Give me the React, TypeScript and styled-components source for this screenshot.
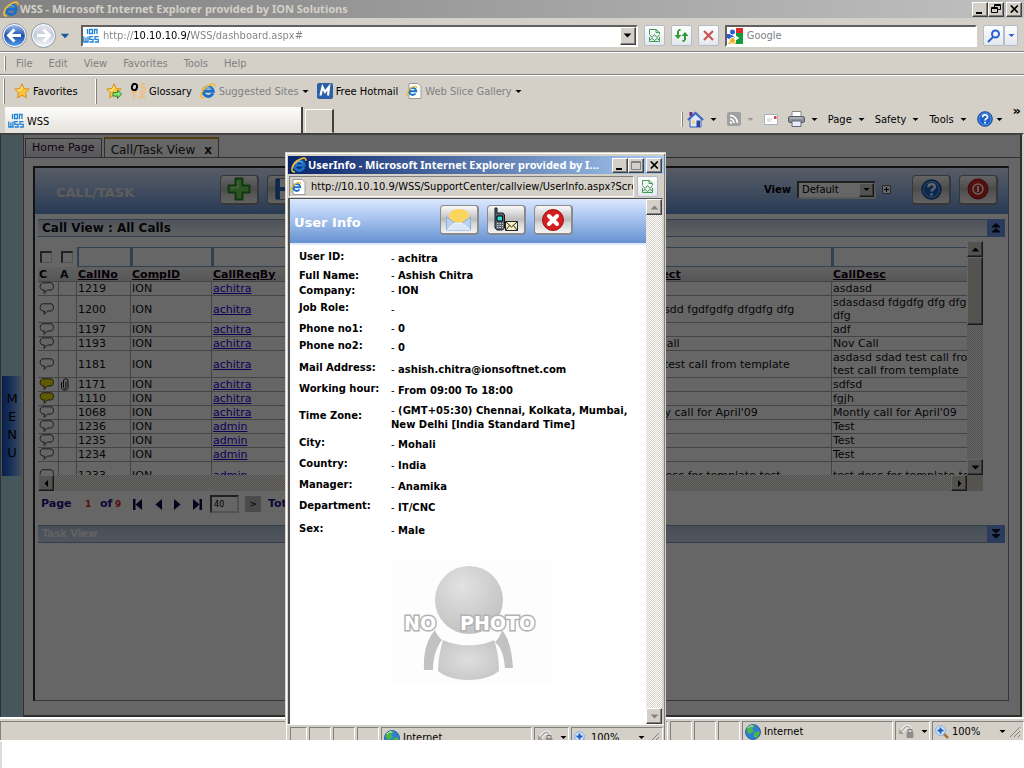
import React from 'react';
import styled, { createGlobalStyle, css } from 'styled-components';

const face = '#d4d0c8';
const ui = '"DejaVu Sans Condensed", "Noto Sans", sans-serif';
const uiBold = '"Noto Sans", "Open Sans", sans-serif';
const wide = '"DejaVu Sans", sans-serif';
const headerFill = 'linear-gradient(#dbe8fd, #b3cbf3 35%, #6592d2)';
const dither = 'repeating-conic-gradient(#ffffff 0 25%, #d4d0c8 0 50%) 0 0 / 2px 2px';

const GlobalStyle = createGlobalStyle`
  * { box-sizing: border-box; }
  body { margin: 0; background: #fff; font: 11px ${ui}; color: #000; }
  button, input, select { font: inherit; margin: 0; padding: 0; border-radius: 0; }
  svg { display: block; flex: none; }
`;

const Desktop = styled.div`
  min-height: 100vh;
  display: flex;
  flex-direction: column;
  padding-bottom: 28px;
  background: linear-gradient(#dedad4, #dedad4) 0 100% / 2px 26px no-repeat #fff;
`;
const BrowserWindow = styled.main`
  position: relative;
  flex: 1;
  display: flex;
  flex-direction: column;
  background: ${face};
`;

const raised = css`
  background: ${face};
  border: 1px solid;
  border-color: #fff #404040 #404040 #fff;
  box-shadow: inset -1px -1px #808080;
`;
const TitleBar = styled.header<{ $active?: boolean }>`
  display: flex;
  align-items: center;
  height: 18px;
  padding: 0 2px 0 3px;
  font: bold 11px/18px ${uiBold};
  color: ${p => (p.$active ? '#fff' : face)};
  background: ${p => (p.$active ? 'linear-gradient(90deg, #0a246a, #a6caf0)' : 'linear-gradient(90deg, #808080, #c0c0c0)')};
`;
const TitleText = styled.h1`
  flex: 1;
  min-width: 0;
  margin: 0;
  padding: 0 6px 0 1px;
  font: inherit;
  white-space: nowrap;
  overflow: hidden;
  text-overflow: ellipsis;
`;
const CaptionButton = styled.button<{ $spaced?: boolean }>`
  ${raised}
  flex: none;
  display: grid;
  place-items: center;
  width: 16px;
  height: 15px;
  margin-left: ${p => (p.$spaced ? 2 : 0)}px;
`;

const NavRow = styled.div`
  display: flex;
  align-items: center;
  gap: 6px;
  height: 34px;
  padding: 2px 6px 0 2px;
  border-bottom: 1px solid #808080;
`;
const Travel = styled.div`
  display: flex;
  align-items: center;
  gap: 4px;
  width: 73px;
`;
const RoundButton = styled.button`
  border: 0;
  background: none;
`;
const SunkenField = styled.div`
  display: flex;
  align-items: center;
  height: 22px;
  min-width: 0;
  background: #fff;
  border: 2px solid;
  border-color: #606060 #fff #fff #606060;
`;
const AddressField = styled(SunkenField)` flex: 561; `;
const SearchField = styled(SunkenField)` flex: 252; gap: 4px; `;
const AddressInput = styled.input`
  flex: 1;
  min-width: 0;
  height: 18px;
  margin-left: 4px;
  border: 0;
  outline: 0;
  color: transparent;
  background: linear-gradient(90deg, #808080 31px, #000 31px 87px, #808080 87px);
  -webkit-background-clip: text;
  background-clip: text;
`;
const PlainInput = styled.input<{ $color: string }>`
  flex: 1;
  min-width: 0;
  width: 100%;
  height: 16px;
  border: 0;
  outline: 0;
  background: none;
  color: ${p => p.$color};
`;
const DropButton = styled.button`
  ${raised}
  flex: none;
  display: grid;
  place-items: center;
  width: 16px;
  height: 18px;
`;
const GlassButton = styled.button<{ $narrow?: boolean }>`
  flex: none;
  display: grid;
  place-items: center;
  width: ${p => (p.$narrow ? 14 : 21)}px;
  height: 21px;
  border: 1px solid #b4bcc8;
  border-radius: 2px;
  background: linear-gradient(#fdfdfd, #e4e8ee);
`;
const Split = styled.div` display: flex; `;

const MenuRow = styled.nav`
  display: flex;
  align-items: center;
  gap: 16px;
  height: 23px;
  padding-left: 4px;
  border-top: 1px solid #fff;
  border-bottom: 1px solid #808080;
`;
const Grip = styled.span<{ $tall?: boolean }>`
  flex: none;
  width: 2px;
  height: ${p => (p.$tall ? 25 : 15)}px;
  margin-right: ${p => (p.$tall ? 8 : -6)}px;
  border-left: 1px solid #fff;
  border-right: 1px solid #808080;
`;
const TextButton = styled.button<{ $muted?: boolean; $gap?: number }>`
  display: flex;
  align-items: center;
  gap: ${p => p.$gap ?? 3}px;
  border: 0;
  background: none;
  white-space: nowrap;
  color: ${p => (p.$muted ? '#808080' : '#000')};
`;
const FavoritesRow = styled.div`
  display: flex;
  align-items: center;
  gap: 9px;
  height: 31px;
  padding-left: 3px;
  border-top: 1px solid #fff;
`;
const FavoritesMain = styled.div` width: 72px; margin-left: -8px; `;
const LinkBar = styled.div` display: flex; align-items: center; gap: 8px; margin-left: -8px; `;
const TabRow = styled.div`
  display: flex;
  align-items: flex-end;
  height: 27px;
  padding: 0 3px 0 5px;
`;
const BrowserTab = styled.button`
  display: flex;
  align-items: center;
  gap: 3px;
  flex: 0 1 298px;
  height: 26px;
  padding: 2px 3px 0;
  text-align: left;
  border: 0;
  border-right: 2px solid #404040;
  background: linear-gradient(#fdfdfc, #e4e1db);
`;
const NewTab = styled.button`
  width: 29px;
  height: 24px;
  margin-left: 2px;
  border: 1px solid;
  border-color: #fff #404040 ${face} #fff;
  border-right-width: 2px;
  background: ${face};
`;
const CommandBar = styled.div`
  display: flex;
  align-items: center;
  gap: 10px;
  height: 28px;
  margin-left: auto;
`;
const Overflow = styled.span` align-self: flex-start; font: bold 13px/12px ${wide}; `;

const PageArea = styled.div`
  flex: 1;
  display: flex;
  border: 0 solid #404040;
  border-top-width: 2px;
  border-right: 2px solid ${face};
`;
const Dimmed = styled.div`
  position: relative;
  flex: 1;
  min-width: 0;
  display: flex;
  background: #fff;
  &::after {
    content: '';
    position: absolute;
    inset: 0;
    background: rgba(0, 0, 0, 0.6);
    pointer-events: none;
  }
`;
const SideRail = styled.aside`
  flex: none;
  display: flex;
  align-items: center;
  width: 24px;
  background: linear-gradient(90deg, #777 1px, #add8e6 1px 22px, #ddd 22px 23px, #777 23px);
`;
const MenuHandle = styled.button`
  width: 20px;
  height: 100px;
  margin-left: 2px;
  padding: 0 2px;
  border: 0;
  font: 13px/18px ${wide};
  color: #000;
  word-break: break-all;
  background: linear-gradient(90deg, #1749bd, #3f7be0 45%, #a9c9ee);
`;
const Frame = styled.section`
  flex: 1;
  min-width: 0;
  display: flex;
  flex-direction: column;
  padding-top: 2px;
  border-right: 2px solid #777;
  border-bottom: 2px solid #777;
`;
const PageTabs = styled.div`
  display: flex;
  align-items: flex-end;
  gap: 2px;
  height: 20px;
  padding-left: 1px;
`;
const PageTab = styled.button<{ $active?: boolean }>`
  display: flex;
  align-items: center;
  gap: 9px;
  height: ${p => (p.$active ? 21 : 19)}px;
  margin-bottom: ${p => (p.$active ? -1 : 0)}px;
  padding: ${p => (p.$active ? '2px 6px 0' : '0 6px')};
  white-space: nowrap;
  font: ${p => (p.$active ? 12 : 11)}px/16px ${wide};
  color: ${p => (p.$active ? '#222' : '#303')};
  border: 1px solid #777;
  border-bottom: 0;
  border-top: ${p => (p.$active ? '2px solid #d69a2a' : '1px solid #777')};
  background: ${p => (p.$active ? '#fff' : 'linear-gradient(#fff, #dcdce8)')};
`;
const Pane = styled.div`
  flex: 1;
  display: flex;
  padding: 8px 11px 14px 9px;
  border-top: 1px solid #777;
`;
const Panel = styled.div`
  flex: 1;
  min-width: 0;
  border: 1px solid #888;
  border-top: 2px solid #303038;
  border-left: 2px solid #303038;
`;
const TaskHeader = styled.header`
  display: flex;
  align-items: center;
  height: 46px;
  padding: 0 10px 3px 21px;
  background: ${headerFill};
`;
const TaskTitle = styled.h2`
  width: 164px;
  margin: 0;
  padding-top: 6px;
  font: bold 13px/16px ${wide};
  color: #e8e8e8;
`;
const Spacer = styled.span` flex: 1; `;
const ToolGroup = styled.div` display: flex; gap: 8px; `;
const ToolButton = styled.button`
  display: grid;
  place-items: center;
  width: 39px;
  height: 30px;
  border: 1px solid #8a8a8a;
  border-right-width: 2px;
  border-bottom-width: 2px;
  border-radius: 4px;
  background: linear-gradient(#fafafa, #dcdcdc 25%, #bcbcbc 50%, #d6d6d6 65%, #f4f4f4);
`;
const ViewPicker = styled.label`
  display: flex;
  align-items: center;
  gap: 6px;
  margin-right: 21px;
  font: bold 10px/12px ${wide};
`;
const SelectBox = styled.span`
  display: flex;
  align-items: center;
  width: 79px;
  height: 18px;
  border: 2px solid;
  border-color: #505050 #ddd #ddd #505050;
  background: #fff;
`;
const Select = styled.select`
  appearance: none;
  flex: 1;
  min-width: 0;
  padding-left: 3px;
  border: 0;
  background: none;
  font: 10px/14px ${wide};
  color: #000;
`;
const SmallDrop = styled.span`
  ${raised}
  display: grid;
  place-items: center;
  width: 15px;
  height: 14px;
`;
const SectionBar = styled.div<{ $faint?: boolean }>`
  display: flex;
  align-items: center;
  justify-content: space-between;
  height: 18px;
  margin: ${p => (p.$faint ? '8px' : '5px')} 3px 0;
  padding-left: 4px;
  font: bold ${p => (p.$faint ? 10 : 12)}px/16px ${wide};
  color: ${p => (p.$faint ? '#f4f6fa' : '#111')};
  border: 1px solid #7f9cba;
  border-width: 1px 0;
  background: ${p => (p.$faint ? 'linear-gradient(#b4c4d8, #c9d6e8)' : 'linear-gradient(#c4d0e0, #eef2f8)')};
`;
const SectionTitle = styled.h3` margin: 0; font: inherit; `;
const FoldButton = styled.button`
  display: grid;
  place-items: center;
  width: 18px;
  height: 18px;
  border: 0;
  background: #6c93e4;
`;
const GridBox = styled.div`
  display: grid;
  grid-template-columns: minmax(0, 1fr) 16px;
  grid-template-rows: 234px 16px;
  margin: 4px 25px 0 3px;
`;
const GridView = styled.div` overflow: hidden; `;
const Table = styled.table`
  table-layout: fixed;
  width: 1054px;
  border-spacing: 0;
  font: 11px/13px ${wide};
  color: #111;
`;
const Col = styled.col<{ $w: number }>` width: ${p => p.$w}px; `;
const FilterCell = styled.td`
  height: 26px;
  padding: 5px 0 0;
`;
const FilterInput = styled.input`
  display: block;
  width: 100%;
  height: 20px;
  border: 1px solid #7aa4cc;
  border-left-width: 2px;
  background: #fff;
`;
const Tick = styled.input`
  appearance: none;
  display: block;
  width: 12px;
  height: 12px;
  margin-left: 2px;
  border: 1px solid #ccc;
  border-top: 2px solid #555;
  border-left: 2px solid #555;
`;
const HeadCell = styled.th`
  height: 15px;
  padding: 0 0 0 1px;
  text-align: left;
  border-bottom: 1px solid #aaa;
  background: linear-gradient(#f4f4f4, #d8d8d8);
`;
const Cell = styled.td<{ $tall?: boolean }>`
  height: ${p => (p.$tall ? 27 : 14)}px;
  padding: 0 0 0 1px;
  white-space: nowrap;
  overflow: hidden;
  border-right: 1px solid #aaa;
  border-bottom: 1px solid #aaa;
`;
const SortLink = styled.a` color: #100010; text-decoration: underline; `;
const CellLink = styled.a` color: #2200dd; text-decoration: underline; `;

const ScrollTrack = styled.div<{ $across?: boolean }>`
  display: flex;
  flex-direction: ${p => (p.$across ? 'row' : 'column')};
  justify-content: space-between;
  background: ${dither};
`;
const ScrollButton = styled.button`
  ${raised}
  display: grid;
  place-items: center;
  width: 16px;
  height: 16px;
`;
const ScrollThumb = styled.div`
  ${raised}
  height: 68px;
  margin-bottom: auto;
`;
const Corner = styled.div` background: ${face}; `;

const Pager = styled.div`
  display: flex;
  align-items: center;
  height: 26px;
  padding-left: 6px;
  font: bold 11px/14px ${wide};
  color: #22128a;
  white-space: nowrap;
`;
const PagerWord = styled.span<{ $w: number }>` width: ${p => p.$w}px; `;
const PagerNumber = styled.span<{ $w: number }>`
  width: ${p => p.$w}px;
  font-size: 9px;
  color: #e02020;
`;
const PagerButton = styled.button<{ $w: number }>`
  width: ${p => p.$w}px;
  border: 0;
  background: none;
`;
const PagerInput = styled.input`
  width: 29px;
  height: 18px;
  margin-right: 6px;
  padding: 0 2px;
  border: 2px solid;
  border-color: #505050 #ccc #ccc #505050;
  font: 9px/12px ${ui};
`;
const GoButton = styled.button`
  width: 16px;
  height: 16px;
  margin-right: 7px;
  border: 0;
  background: #bbb;
  font: 9px/14px ${wide};
`;

const StatusBar = styled.footer<{ $popup?: boolean }>`
  display: flex;
  gap: 2px;
  height: ${p => (p.$popup ? 16 : 23)}px;
  padding: ${p => (p.$popup ? '2px 0 0 3px' : '2px 0 0')};
  overflow: hidden;
  border-top: ${p => (p.$popup ? '1px solid #fff' : '2px solid #fff')};
`;
const StatusCell = styled.div<{ $w?: number }>`
  display: flex;
  align-items: center;
  gap: 3px;
  flex: ${p => (p.$w ? `none` : '1')};
  width: ${p => (p.$w ? `${p.$w}px` : 'auto')};
  height: 20px;
  padding: 0 2px;
  border-left: 1px solid #808080;
  border-top: 1px solid #808080;
  border-right: 1px solid #fff;
  white-space: nowrap;
`;

const Popup = styled.section`
  position: absolute;
  top: 152px;
  bottom: 0;
  left: 285px;
  width: 381px;
  display: flex;
  flex-direction: column;
  overflow: hidden;
  padding: 2px 1px 0;
  background: ${face};
  border: 1px solid ${face};
  border-bottom: 0;
  box-shadow: inset 1px 1px #fff, inset -1px 0 #808080;
`;
const PopupTitle = styled.div` padding: 1px 0 1px 1px; `;
const PopupAddress = styled.div`
  display: flex;
  align-items: center;
  gap: 3px;
  height: 23px;
  padding: 0 6px 0 2px;
`;
const PopupField = styled.div`
  flex: 1;
  display: flex;
  align-items: center;
  gap: 5px;
  min-width: 0;
  height: 21px;
  border: 1px solid;
  border-color: #808080 #fff #fff #808080;
`;
const PopupBody = styled.div`
  flex: 1;
  display: flex;
  margin: 0 1px;
  border: 0 solid #505050;
  border-top-width: 1px;
  border-left-width: 2px;
  border-right: 1px solid ${face};
`;
const Doc = styled.div` flex: 1; background: #fff; `;
const InfoHeader = styled.header`
  display: flex;
  align-items: center;
  height: 46px;
  padding: 0 73px 2px 4px;
  border-bottom: 2px solid #dfeafc;
  background: ${headerFill};
`;
const InfoTitle = styled.h2`
  flex: 1;
  margin: 0;
  padding-top: 6px;
  font: bold 13px/16px ${wide};
  color: #fff;
`;
const InfoTable = styled.table`
  margin: 5px 0 17px 9px;
  border-spacing: 0;
  font: bold 10px/14px ${wide};
`;
const InfoRow = styled.tr<{ $h: number }>` height: ${p => p.$h}px; `;
const InfoLabel = styled.th<{ $lift?: boolean }>`
  width: 92px;
  padding: 0 0 ${p => (p.$lift ? 4 : 0)}px;
  text-align: left;
  white-space: nowrap;
`;
const InfoValue = styled.td` padding: 0; white-space: nowrap; `;
const Dash = styled.span` font-weight: normal; `;
const Photo = styled.figure` margin: 0 0 0 102px; `;

const Arrow = ({ dir = 'down', color = '#000', size = 7 }: { dir?: 'up' | 'down' | 'left' | 'right'; color?: string; size?: number }) => {
  const shape = { down: 'M.5 2h6L3.500 5z', up: 'M.5 5h6L3.500 2z', left: 'M5 0v7L1.500 3.500z', right: 'M2 0v7l3.500-3.500z' }[dir];
  return <svg width={size} height={size} viewBox="0 0 7 7" fill={color}><path d={shape} /></svg>;
};
const IELogo = ({ size = 16 }: { size?: number }) => (
  <svg width={size} height={size} viewBox="0 0 16 16" fill="none">
    <path d="M13 10.300A5 4.800 0 1 1 13.300 8.300H5" stroke="#1d70c8" strokeWidth="3" />
    <path d="M4.500 7C5.500 4.500 9.500 3.500 11.500 6" stroke="#7cc6f5" strokeWidth="1" />
    <path d="M4 14.800C-1 16 .5 8 6 4 10.500.8 15.500-.5 14.800 3.800" stroke="#f3bc2c" strokeWidth="1.600" />
  </svg>
);
const PageLogo = () => (
  <svg width="16" height="16" viewBox="0 0 16 16">
    <path d="M3 .5h9l3 3v12H3z" fill="#fff" stroke="#9a9a9a" />
    <g fill="none"><path d="M9.500 10.500a3.500 3.500 0 1 1 .7-2.300H4" stroke="#1d70c8" strokeWidth="2" /><path d="M2 13C-.5 12 2 6.500 6 4.500 9 3 11 3 10.500 5" stroke="#f3bc2c" strokeWidth="1.200" /></g>
  </svg>
);
const SiteLogo = () => (
  <svg width="16" height="16" viewBox="0 0 16 16" fill="none" stroke="#1f83d8" strokeWidth="1.300">
    <path d="M4.500 1v5M6.500 1.500h3v4h-3zM11.500 6V1.500h2.500V6M.8 8.500V14h4.200V8.500M2.900 9.500v4.500M10 8.700H6.800v2.600H10V14H6.500M15.500 8.700H12v2.600h3.200V14H11.700" />
  </svg>
);
const Minimize = () => <svg width="10" height="9"><path d="M1 7h6v2H1z" /></svg>;
const Restore = () => <svg width="10" height="10" fill="none" stroke="#000"><path d="M3.500 3V.5h6v5H7M3 1.500h7M.5 3.500h6v5h-6zM0 4.500h7" /></svg>;
const Maximize = () => <svg width="10" height="9" fill="none" stroke="#808080"><path d="M.5.500h9v8h-9zM0 1.500h10" /></svg>;
const CloseGlyph = () => <svg width="9" height="8" fill="none" stroke="#000" strokeWidth="1.700"><path d="M.8.500l7 7M7.800.500l-7 7" /></svg>;
const CompatPage = () => (
  <svg width="13" height="15" viewBox="0 0 13 15" fill="none" stroke="#3f9a55">
    <path d="M1.500 6V1.500h6.500l3.500 3V6M8 1.500v3h3.500M1.500 6.500l2.500 3 2.500-3 2.500 3 2.500-3M1.500 9v4.500h10V9M1.500 12l2.500-1.500 2.500 2 2.500-2 2.500 1.500" />
  </svg>
);
const TravelArrow = ({ back }: { back?: boolean }) => (
  <svg width="25" height="25" viewBox="0 0 25 25">
    <defs>
      <linearGradient id={back ? 'tb' : 'tf'} x1="0" y1="0" x2="0" y2="1">
        <stop offset="0" stopColor={back ? '#9dbfee' : '#dfe5ee'} />
        <stop offset=".5" stopColor={back ? '#1f4fae' : '#c4ccd8'} />
        <stop offset="1" stopColor={back ? '#4e9bea' : '#f5f8fc'} />
      </linearGradient>
    </defs>
    <circle cx="12.500" cy="12.500" r="12" fill="#fff" stroke="#8892a4" />
    <circle cx="12.500" cy="12.500" r="10.500" fill={`url(#${back ? 'tb' : 'tf'})`} />
    <path d={back ? 'M12.500 6.500l-6 6 6 6M7 12.500h12' : 'M12.500 6.500l6 6-6 6M18 12.500H6'} fill="none" stroke="#fff" strokeWidth="3" />
  </svg>
);
const RefreshIcon = () => (
  <svg width="15" height="15" viewBox="0 0 15 15" fill="#2f9a35"><path d="M6.500 1v2H5v4h2.500L4 11 .5 7H3V3.500L5 1zM8.500 14v-2H10V8H7.500L11 4l3.500 4H12v3.500L10 14z" /></svg>
);
const StopIcon = () => <svg width="13" height="13" fill="none" stroke="#c8504c" strokeWidth="2"><path d="M2 2l9 9M11 2l-9 9" /></svg>;
const GoogleIcon = () => (
  <svg width="16" height="16" viewBox="0 0 16 16">
    <path fill="#fff" d="M0 0h16v16H0z" /><path fill="#2a5bd7" d="M0 6h5l3 4-4 2-4-2z" /><path fill="#e22b28" d="M9 0h7v5H9z" /><path fill="#129a3c" d="M9 5h7v11H9z" /><path fill="#f5ae1b" d="M1 16l2-4h5l1 4z" />
    <circle cx="5.500" cy="4" r="3" fill="#2a5bd7" stroke="#fff" /><circle cx="5.500" cy="12.500" r="3" fill="#f5ae1b" stroke="#fff" /><path d="M6 7l5 3-3 2" fill="none" stroke="#fff" strokeWidth="1.500" />
  </svg>
);
const SearchIcon = () => <svg width="14" height="14" fill="none" stroke="#2b5fd0" strokeWidth="2"><circle cx="8.500" cy="5" r="3.500" /><path d="M6 8l-5 5" /></svg>;
const starPath = 'M8 .8l2.200 4.700 5.100.6-3.800 3.500 1 5.200L8 12.300l-4.500 2.500 1-5.200L.7 6.100l5.100-.6z';
const Star = ({ add }: { add?: boolean }) => (
  <svg width="16" height="16" viewBox="0 0 16 16">
    <path d={starPath} fill="#fbc53c" stroke="#d88f1c" /><path d="M8 3.500L6.500 7 3 7.500" fill="none" stroke="#fff0b0" />
    {add && <path d="M7 9.500h4.500V7l4 4-4 4.500V13H7z" fill="#8ade74" stroke="#2d8a2a" />}
  </svg>
);
const OsIcon = () => (
  <svg width="16" height="16" viewBox="0 0 16 16"><ellipse cx="4.500" cy="4" rx="2.500" ry="3.200" fill="none" stroke="#000" strokeWidth="2" transform="rotate(15 4.500 4)" /><path d="M15 1c-5-1-5 4-2 3.500s3 4-2 3M1 9h6M4 9v7M15 9l-6 7M10 9l5 7" fill="none" stroke="#f2bd78" strokeWidth="1.800" /></svg>
);
const MIcon = () => <svg width="16" height="16"><rect width="16" height="16" rx="2" fill="#2c5fa8" /><path d="M3.500 12.500L5.500 4l2.500 5 4-5-1 8.500" fill="none" stroke="#fff" strokeWidth="2.200" /></svg>;
const HomeIcon = () => (
  <svg width="17" height="17" viewBox="0 0 17 17"><path d="M2.500 1h3v4h-3z" fill="#6a2a7c" /><path d="M3 8v8h11V8L8.500 3z" fill="#dce8fb" stroke="#3b5fb5" /><path d="M.8 9L8.500 1.800 16.200 9" fill="none" stroke="#3e66c2" strokeWidth="1.800" /><path d="M9.500 9.500H13V16H9.500z" fill="#254a9c" /><path d="M5 9.500h3v3H5z" fill="#f3d66f" /></svg>
);
const FeedIcon = () => <svg width="14" height="14"><rect width="14" height="14" rx="2" fill="#a0a0a0" /><g fill="none" stroke="#fff" strokeWidth="1.600"><path d="M3 3.500a7.500 7.500 0 0 1 7.500 7.500M3 7a4 4 0 0 1 4 4" /></g><circle cx="4" cy="10.500" r="1.200" fill="#fff" /></svg>;
const MailIcon = () => <svg width="14" height="11"><path d="M.5.500h13v10H.5z" fill="#fff" stroke="#a8b0bc" /><path d="M10 2h2.500v3H10z" fill="#d44" /><path d="M3 5h5M3 7h4" stroke="#c8c8c8" /></svg>;
const PrintIcon = () => <svg width="17" height="16"><path d="M4 .5h9v6H4z" fill="#fff" stroke="#888" /><rect x=".5" y="5.500" width="16" height="6" rx="1.500" fill="#8b8f98" stroke="#5a5e66" /><path d="M2 7h13" stroke="#ccd" /><path d="M4 10h9v5.500H4z" fill="#e6effb" stroke="#667" /></svg>;
const HelpIcon = ({ size = 16 }: { size?: number }) => (
  <svg width={size} height={size} viewBox="0 0 20 20"><circle cx="10" cy="10" r="9.200" fill="#1c62c8" stroke="#0d3e92" /><circle cx="10" cy="10" r="7.500" fill="none" stroke="#6ca4ec" /><path d="M7 7.800c0-4 6.200-3.800 6.200-.3 0 2-3.200 2.200-3.200 4.500M10 13.500v2.200" fill="none" stroke="#fff" strokeWidth="2.200" /></svg>
);
const PowerIcon = () => <svg width="22" height="22"><circle cx="11" cy="11" r="10" fill="#d42a22" stroke="#98120e" /><circle cx="11" cy="11" r="5" fill="none" stroke="#fff" strokeWidth="1.400" /><path d="M11 8v6" stroke="#fff" strokeWidth="1.800" /></svg>;
const PlusIcon = () => <svg width="24" height="24"><path d="M8.500 1.500h7v7h7v7h-7v7h-7v-7h-7v-7h7z" fill="#6fd458" stroke="#2c8a28" strokeWidth="2" strokeLinejoin="round" /><path d="M11 4v6.500H4" fill="none" stroke="#a8ec98" strokeWidth="2" /></svg>;
const DiskIcon = () => <svg width="22" height="22"><path d="M1 1h18l2 2v18H1z" fill="#2a6ccc" stroke="#123e86" /><path d="M5 1h11v8H5zM5 13h12v8H5z" fill="#fff" /></svg>;
const FoldIcon = ({ down }: { down?: boolean }) => <svg width="8" height="10"><path d={down ? 'M0 0h8v1L4 4.500 0 1zM0 5h8v1L4 9.500 0 6z' : 'M4 0l4 3.500V4.500H0V3.500zM4 5l4 3.500v1H0v-1z'} fill="#0a0f28" /></svg>;
const Bubble = ({ fill = 'none' }: { fill?: string }) => <svg width="16" height="13"><path d="M4 .8h8c3.200 0 3.200 7.200 0 7.200H8.500L5 11.500 5.500 8H4C.2 8 .2.800 4 .800z" fill={fill} stroke="#444" /></svg>;
const Clip = () => <svg width="9" height="13" fill="none" stroke="#111"><path d="M6 3.500v5.500c0 2-2.500 2-2.500 0V3c0-3 4.500-3 4.500 0v6.500c0 3.500-6.500 3.500-6.500 0V4" /></svg>;
const Step = ({ flip, bar }: { flip?: boolean; bar?: boolean }) => (
  <svg width="10" height="11"><g transform={flip ? 'translate(10 0) scale(-1 1)' : undefined} fill="#0c0848"><path d="M9 0v11L2.500 5.500z" />{bar && <path d="M0 0h2.500v11H0z" />}</g></svg>
);
const EnvelopeIcon = () => (
  <svg width="28" height="26"><path d="M4 8h20v8H4z" fill="#fbd04c" /><path d="M4 8c1-3 4-6 10-6s10 3 10 6l-1 5c-5 2-13 2-18 0z" fill="#fbd560" /><path d="M1.500 10v13.500h24V10l-8.500 6H10z" fill="#b9d3ef" stroke="#86aee0" /><path d="M1.500 23.500L10 16h7l8.500 7.500" fill="#d8e6f8" stroke="#f8fbff" /></svg>
);
const PhoneIcon = () => (
  <svg width="26" height="26"><path d="M2 1h2v5h6l1.500 2v13l-2 2H4l-2-2z" fill="#5c6470" stroke="#15181c" /><path d="M4 9h5.500v5H4z" fill="#2fdede" stroke="#000" /><path d="M4 16.500h6M4 18.500h6M4 20.500h6" stroke="#c6ccd4" strokeDasharray="1.500 1" /><path d="M12.500 14.500h12v9h-12z" fill="#f2efc0" stroke="#222" /><path d="M12.500 14.500l6 5.500 6-5.500M12.500 23.500l4-5M24.500 23.500l-4-5" fill="none" stroke="#222" /></svg>
);
const CancelIcon = () => <svg width="24" height="24"><circle cx="12" cy="12" r="10.500" fill="#d3201f" stroke="#a01212" /><path d="M8 8l8 8M16 8l-8 8" stroke="#fff" strokeWidth="4" strokeLinecap="round" /></svg>;
const Globe = () => <svg width="16" height="16"><circle cx="8" cy="8" r="7.500" fill="#2b7fd4" stroke="#1b5494" strokeWidth=".8" /><path d="M2 4c2-3 6-4 8-2L7 5l2 2-4 3-3-2zM9 9l4-2 2 2-3 5-3-1z" fill="#4eb648" /><path d="M3 4c1.500-2 4-2.500 5-2" stroke="#c8ecff" fill="none" /></svg>;
const ShieldIcon = () => <svg width="17" height="15"><path d="M3 8l4-4.500c2-2 5-1 5 1.500" fill="none" stroke="#f4f4f4" strokeWidth="3.500" /><path d="M3 8l4-4.500c2-2 5-1 5 1.500" fill="none" stroke="#a8a8a8" strokeWidth="1.500" /><path d="M1 5v5h5z" fill="#a0a0a0" /><rect x="8.500" y="8" width="7" height="6" rx="1" fill="#8e8e8e" /><path d="M10 8V5.500h4V8" fill="none" stroke="#777" /></svg>;
const ZoomIcon = () => <svg width="14" height="14"><path d="M8.500 8.500l4.500 4.500" stroke="#a8743c" strokeWidth="2.500" /><circle cx="5.500" cy="5.500" r="4.800" fill="#d6eafd" stroke="#7fa8d8" /><path d="M5.500 2.500v6M2.500 5.500h6" stroke="#1c5cc0" strokeWidth="2" /></svg>;
const SizeGrip = () => <svg width="12" height="12" stroke="#808080"><path d="M1 11L11 1M5 11l6-6M9 11l2-2" /></svg>;
const NoPhoto = () => (
  <svg width="160" height="124" viewBox="0 0 160 124" role="img" aria-label="No photo">
    <defs>
      <radialGradient id="head" cx=".4" cy=".3" r=".8"><stop offset="0" stopColor="#e2e2e2" /><stop offset="1" stopColor="#bebebe" /></radialGradient>
      <radialGradient id="torso" cx=".5" cy=".5" r=".7"><stop offset="0" stopColor="#dedede" /><stop offset="1" stopColor="#c2c2c2" /></radialGradient>
    </defs>
    <rect width="160" height="124" fill="#fdfdfd" />
    <circle cx="77" cy="39" r="34" fill="url(#head)" />
    <path d="M43 69c-8 9-12 23-11 40h9c0-12 3-22 9-30 0 0-5-4-7-10zM110 69c7 8 10 22 11 38h-8c-1-11-3-20-10-26 0 0 5-4 7-12z" fill="#c2c2c2" />
    <path d="M51 79c14 7 38 7 51 0 4 12 5 21 5 31-14 12-47 12-61 0 0-10 2-21 5-31z" fill="url(#torso)" />
    <g fontFamily="DejaVu Sans" fontWeight="bold" fontSize="19" fill="#fff" stroke="#b2b2b2" strokeWidth="3" style={{ paintOrder: 'stroke' }}>
      <text x="12" y="69">NO</text><text x="68" y="69">PHOTO</text>
    </g>
  </svg>
);

type Call = { no: string; by: string; subject?: string; desc: string[]; flagged?: boolean; clip?: boolean; tall?: boolean };
const calls: Call[] = [
  { no: '1219', by: 'achitra', desc: ['asdasd'] },
  { no: '1200', by: 'achitra', subject: 'asdfasdd fgdfgdfg dfgdfg dfg', desc: ['sdasdasd fdgdfg dfg dfg', 'dfg'] },
  { no: '1197', by: 'achitra', desc: ['adf'] },
  { no: '1193', by: 'achitra', subject: 'Nov Call', desc: ['Nov Call'] },
  { no: '1181', by: 'achitra', subject: 'sdad test call from template', desc: ['asdasd sdad test call from', 'test call from template'] },
  { no: '1171', by: 'achitra', desc: ['sdfsd'], flagged: true, clip: true },
  { no: '1110', by: 'achitra', desc: ['fgjh'], flagged: true },
  { no: '1068', by: 'achitra', subject: "Montly call for April'09", desc: ["Montly call for April'09"] },
  { no: '1236', by: 'admin', desc: ['Test'] },
  { no: '1235', by: 'admin', desc: ['Test'] },
  { no: '1234', by: 'admin', desc: ['Test'] },
  { no: '1233', by: 'admin', subject: 'test desc for template test', desc: ['test desc for template test'], tall: true },
];
const columns = [21, 18, 54, 81, 421, 199, 260];

type Field = { label: string; value: string[]; h: number; lift?: boolean };
const fields: Field[] = [
  { label: 'User ID:', value: ['achitra'], h: 17, lift: true },
  { label: 'Full Name:', value: ['Ashish Chitra'], h: 15 },
  { label: 'Company:', value: ['ION'], h: 15 },
  { label: 'Job Role:', value: [''], h: 24, lift: true },
  { label: 'Phone no1:', value: ['0'], h: 14 },
  { label: 'Phone no2:', value: ['0'], h: 24, lift: true },
  { label: 'Mail Address:', value: ['ashish.chitra@ionsoftnet.com'], h: 20, lift: true },
  { label: 'Working hour:', value: ['From 09:00 To 18:00'], h: 22, lift: true },
  { label: 'Time Zone:', value: ['(GMT+05:30) Chennai, Kolkata, Mumbai,', 'New Delhi [India Standard Time]'], h: 32, lift: true },
  { label: 'City:', value: ['Mohali'], h: 21, lift: true },
  { label: 'Country:', value: ['India'], h: 21, lift: true },
  { label: 'Manager:', value: ['Anamika'], h: 21, lift: true },
  { label: 'Department:', value: ['IT/CNC'], h: 21, lift: true },
  { label: 'Sex:', value: ['Male'], h: 26, lift: true },
];

const Lines = ({ text }: { text: string[] }) => <>{text.map((t, i) => <React.Fragment key={i}>{i > 0 && <br />}{t}</React.Fragment>)}</>;

const StatusCells = ({ first }: { first: number }) => (
  <>
    <StatusCell $w={first} /><StatusCell $w={22} /><StatusCell $w={22} />
    {first < 20 && <StatusCell $w={22} />}
    <StatusCell $w={151}><Globe />Internet</StatusCell>
    <StatusCell $w={35}><ShieldIcon /><Spacer /><Arrow /></StatusCell>
    <StatusCell $w={92}><ZoomIcon />100%<Spacer /><Arrow /><SizeGrip /></StatusCell>
  </>
);

const CallGrid = () => (
  <GridBox>
    <GridView>
      <Table>
        <colgroup>{columns.map((w, i) => <Col key={i} $w={w} />)}</colgroup>
        <thead>
          <tr>
            <FilterCell><Tick type="checkbox" aria-label="Commented" /></FilterCell>
            <FilterCell><Tick type="checkbox" aria-label="Attached" /></FilterCell>
            {['CallNo', 'CompID', 'CallReqBy', 'Subject', 'CallDesc'].map(n => <FilterCell key={n}><FilterInput aria-label={n} /></FilterCell>)}
          </tr>
          <tr>
            <HeadCell>C</HeadCell><HeadCell>A</HeadCell>
            {['CallNo', 'CompID', 'CallReqBy', 'Subject', 'CallDesc'].map(n => <HeadCell key={n}><SortLink href="#">{n}</SortLink></HeadCell>)}
          </tr>
        </thead>
        <tbody>
          {calls.map(c => (
            <tr key={c.no}>
              <Cell $tall={c.tall}><Bubble fill={c.flagged ? '#f0e000' : 'none'} /></Cell>
              <Cell>{c.clip && <Clip />}</Cell>
              <Cell>{c.no}</Cell>
              <Cell>ION</Cell>
              <Cell><CellLink href="#">{c.by}</CellLink></Cell>
              <Cell>{c.subject}</Cell>
              <Cell><Lines text={c.desc} /></Cell>
            </tr>
          ))}
        </tbody>
      </Table>
    </GridView>
    <ScrollTrack>
      <ScrollButton aria-label="Scroll up"><Arrow dir="up" size={9} /></ScrollButton>
      <ScrollThumb />
      <ScrollButton aria-label="Scroll down"><Arrow size={9} /></ScrollButton>
    </ScrollTrack>
    <ScrollTrack $across>
      <ScrollButton aria-label="Scroll left"><Arrow dir="left" /></ScrollButton>
      <ScrollButton aria-label="Scroll right"><Arrow dir="right" /></ScrollButton>
    </ScrollTrack>
    <Corner />
  </GridBox>
);

const UserInfo = () => (
  <Popup>
    <PopupTitle>
      <TitleBar $active>
        <IELogo />
        <TitleText>UserInfo - Microsoft Internet Explorer provided by ION Solutions</TitleText>
        <CaptionButton aria-label="Minimize"><Minimize /></CaptionButton>
        <CaptionButton aria-label="Maximize"><Maximize /></CaptionButton>
        <CaptionButton $spaced aria-label="Close"><CloseGlyph /></CaptionButton>
      </TitleBar>
    </PopupTitle>
    <PopupAddress>
      <PopupField><PageLogo /><PlainInput $color="#000" aria-label="Address" readOnly value="http://10.10.10.9/WSS/SupportCenter/callview/UserInfo.aspx?ScreenID=1" /></PopupField>
      <GlassButton aria-label="Compatibility view"><CompatPage /></GlassButton>
    </PopupAddress>
    <PopupBody>
      <Doc>
        <InfoHeader>
          <InfoTitle>User Info</InfoTitle>
          <ToolGroup>
            <ToolButton aria-label="Send mail"><EnvelopeIcon /></ToolButton>
            <ToolButton aria-label="Send SMS"><PhoneIcon /></ToolButton>
            <ToolButton aria-label="Close"><CancelIcon /></ToolButton>
          </ToolGroup>
        </InfoHeader>
        <InfoTable>
          <tbody>
            {fields.map(f => (
              <InfoRow key={f.label} $h={f.h}>
                <InfoLabel scope="row" $lift={f.lift}>{f.label}</InfoLabel>
                <InfoValue><Dash>-</Dash> <Lines text={f.value} /></InfoValue>
              </InfoRow>
            ))}
          </tbody>
        </InfoTable>
        <Photo><NoPhoto /></Photo>
      </Doc>
      <ScrollTrack>
        <ScrollButton aria-label="Scroll up"><Arrow dir="up" color="#808080" size={9} /></ScrollButton>
        <ScrollButton aria-label="Scroll down"><Arrow color="#808080" size={9} /></ScrollButton>
      </ScrollTrack>
    </PopupBody>
    <StatusBar $popup><StatusCells first={17} /></StatusBar>
  </Popup>
);

export default function App() {
  return (
    <Desktop>
      <GlobalStyle />
      <BrowserWindow>
        <TitleBar>
          <IELogo />
          <TitleText>WSS - Microsoft Internet Explorer provided by ION Solutions</TitleText>
          <CaptionButton aria-label="Minimize"><Minimize /></CaptionButton>
          <CaptionButton aria-label="Restore"><Restore /></CaptionButton>
          <CaptionButton $spaced aria-label="Close"><CloseGlyph /></CaptionButton>
        </TitleBar>
        <NavRow>
          <Travel>
            <RoundButton aria-label="Back"><TravelArrow back /></RoundButton>
            <RoundButton aria-label="Forward"><TravelArrow /></RoundButton>
            <RoundButton aria-label="Recent pages"><Arrow color="#1c5c9c" size={10} /></RoundButton>
          </Travel>
          <AddressField>
            <SiteLogo />
            <AddressInput aria-label="Address" defaultValue="http://10.10.10.9/WSS/dashboard.aspx#" />
            <DropButton aria-label="Show addresses"><Arrow size={9} /></DropButton>
          </AddressField>
          <GlassButton aria-label="Compatibility view"><CompatPage /></GlassButton>
          <GlassButton aria-label="Refresh"><RefreshIcon /></GlassButton>
          <GlassButton aria-label="Stop"><StopIcon /></GlassButton>
          <SearchField><GoogleIcon /><PlainInput $color="#808080" aria-label="Search" defaultValue="Google" /></SearchField>
          <Split>
            <GlassButton aria-label="Search"><SearchIcon /></GlassButton>
            <GlassButton $narrow aria-label="Search options"><Arrow color="#2b5fd0" /></GlassButton>
          </Split>
        </NavRow>
        <MenuRow>
          <Grip />
          {['File', 'Edit', 'View', 'Favorites', 'Tools', 'Help'].map(m => <TextButton key={m} $muted>{m}</TextButton>)}
        </MenuRow>
        <FavoritesRow>
          <Grip $tall />
          <FavoritesMain><TextButton><Star />Favorites</TextButton></FavoritesMain>
          <Grip $tall />
          <LinkBar>
            <TextButton aria-label="Add to favorites"><Star add /></TextButton>
            <TextButton><OsIcon />Glossary</TextButton>
            <TextButton $muted><IELogo />Suggested Sites <Arrow color="#000" /></TextButton>
            <TextButton><MIcon />Free Hotmail</TextButton>
            <TextButton $muted><PageLogo />Web Slice Gallery <Arrow color="#000" /></TextButton>
          </LinkBar>
        </FavoritesRow>
        <TabRow>
          <BrowserTab><SiteLogo />WSS</BrowserTab>
          <NewTab aria-label="New tab" />
          <CommandBar>
            <Grip />
            <TextButton $gap={6} aria-label="Home"><HomeIcon /><Arrow /></TextButton>
            <TextButton $gap={6} aria-label="Feeds"><FeedIcon /><Arrow color="#999" /></TextButton>
            <TextButton aria-label="Read mail"><MailIcon /></TextButton>
            <TextButton $gap={6} aria-label="Print"><PrintIcon /><Arrow /></TextButton>
            <TextButton $gap={6}>Page <Arrow /></TextButton>
            <TextButton $gap={6}>Safety <Arrow /></TextButton>
            <TextButton $gap={6}>Tools <Arrow /></TextButton>
            <TextButton aria-label="Help"><HelpIcon /><Arrow /></TextButton>
            <Overflow>»</Overflow>
          </CommandBar>
        </TabRow>
        <PageArea>
          <Dimmed>
            <SideRail><MenuHandle>M E N U</MenuHandle></SideRail>
            <Frame>
              <PageTabs>
                <PageTab>Home Page</PageTab>
                <PageTab $active>Call/Task View <b>x</b></PageTab>
              </PageTabs>
              <Pane>
                <Panel>
                  <TaskHeader>
                    <TaskTitle>CALL/TASK</TaskTitle>
                    <ToolGroup>
                      <ToolButton aria-label="New"><PlusIcon /></ToolButton>
                      <ToolButton aria-label="Save"><DiskIcon /></ToolButton>
                    </ToolGroup>
                    <Spacer />
                    <ToolButton aria-label="Cancel"><CancelIcon /></ToolButton>
                    <Spacer />
                    <ViewPicker>View
                      <SelectBox><Select defaultValue="Default"><option>Default</option></Select><SmallDrop><Arrow /></SmallDrop></SelectBox>
                      <svg width="9" height="9"><path d="M.5.500h8v8h-8z" fill="#fff" stroke="#666" /><path d="M2 4.500h5M4.500 2v5" stroke="#000" /></svg>
                    </ViewPicker>
                    <ToolGroup>
                      <ToolButton aria-label="Help"><HelpIcon size={21} /></ToolButton>
                      <ToolButton aria-label="Exit"><PowerIcon /></ToolButton>
                    </ToolGroup>
                  </TaskHeader>
                  <SectionBar><SectionTitle>Call View : All Calls</SectionTitle><FoldButton aria-label="Collapse"><FoldIcon /></FoldButton></SectionBar>
                  <CallGrid />
                  <Pager>
                    <PagerWord $w={44}>Page</PagerWord><PagerNumber $w={15}>1</PagerNumber>
                    <PagerWord $w={15}>of</PagerWord><PagerNumber $w={18}>9</PagerNumber>
                    <PagerButton $w={20} aria-label="First page"><Step bar /></PagerButton>
                    <PagerButton $w={20} aria-label="Previous page"><Step /></PagerButton>
                    <PagerButton $w={19} aria-label="Next page"><Step flip /></PagerButton>
                    <PagerButton $w={18} aria-label="Last page"><Step flip bar /></PagerButton>
                    <PagerInput aria-label="Page size" defaultValue="40" />
                    <GoButton>&gt;</GoButton>
                    Total
                  </Pager>
                  <SectionBar $faint><SectionTitle>Task View</SectionTitle><FoldButton aria-label="Expand"><FoldIcon down /></FoldButton></SectionBar>
                </Panel>
              </Pane>
            </Frame>
          </Dimmed>
        </PageArea>
        <StatusBar><StatusCell /><StatusCells first={22} /></StatusBar>
        <UserInfo />
      </BrowserWindow>
    </Desktop>
  );
}
